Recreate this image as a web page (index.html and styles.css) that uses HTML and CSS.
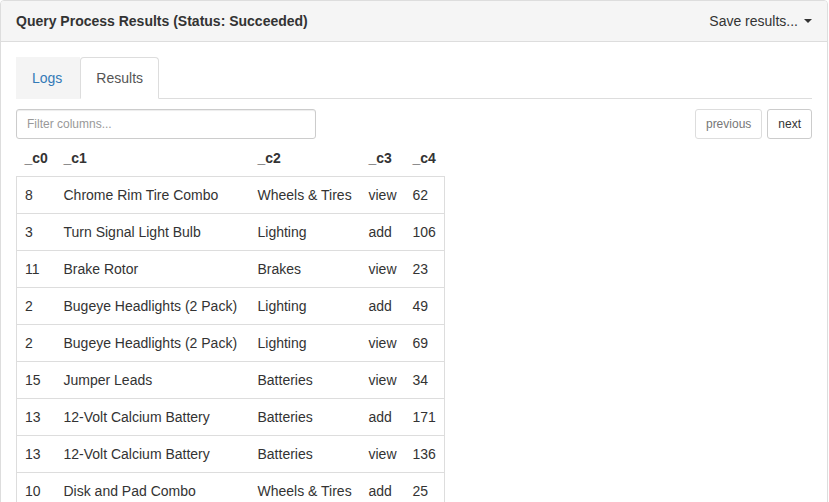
FILE: index.html
```html
<!DOCTYPE html>
<html>
<head>
<meta charset="utf-8">
<link rel="stylesheet" href="styles.css">
</head>
<body>
<div class="panel">
  <div class="panel-heading">
    <span class="panel-title">Query Process Results (Status: Succeeded)</span>
    <span class="save">Save results... <span class="caret"></span></span>
  </div>
  <div class="panel-body">
    <ul class="nav-tabs">
      <li class="tab"><a class="tab-link logs">Logs</a></li>
      <li class="tab active"><a class="tab-link">Results</a></li>
    </ul>
    <div class="toolbar">
      <input class="filter" type="text" placeholder="Filter columns...">
      <div class="pager">
        <button class="btn disabled">previous</button>
        <button class="btn">next</button>
      </div>
    </div>
    <table class="grid">
      <colgroup>
        <col class="w0"><col class="w1"><col class="w2"><col class="w3"><col class="w4">
      </colgroup>
      <thead>
        <tr><th>_c0</th><th>_c1</th><th>_c2</th><th>_c3</th><th>_c4</th></tr>
      </thead>
      <tbody>
        <tr><td>8</td><td>Chrome Rim Tire Combo</td><td>Wheels &amp; Tires</td><td>view</td><td>62</td></tr>
        <tr><td>3</td><td>Turn Signal Light Bulb</td><td>Lighting</td><td>add</td><td>106</td></tr>
        <tr><td>11</td><td>Brake Rotor</td><td>Brakes</td><td>view</td><td>23</td></tr>
        <tr><td>2</td><td>Bugeye Headlights (2 Pack)</td><td>Lighting</td><td>add</td><td>49</td></tr>
        <tr><td>2</td><td>Bugeye Headlights (2 Pack)</td><td>Lighting</td><td>view</td><td>69</td></tr>
        <tr><td>15</td><td>Jumper Leads</td><td>Batteries</td><td>view</td><td>34</td></tr>
        <tr><td>13</td><td>12-Volt Calcium Battery</td><td>Batteries</td><td>add</td><td>171</td></tr>
        <tr><td>13</td><td>12-Volt Calcium Battery</td><td>Batteries</td><td>view</td><td>136</td></tr>
        <tr><td>10</td><td>Disk and Pad Combo</td><td>Wheels &amp; Tires</td><td>add</td><td>25</td></tr>
      </tbody>
    </table>
  </div>
</div>
</body>
</html>
```
FILE: styles.css
```css
html, body {
  margin: 0;
  padding: 0;
  background: #fff;
  font-family: "Liberation Sans", Arial, sans-serif;
  font-size: 14px;
  line-height: 20px;
  color: #333;
  overflow: hidden;
}
.panel {
  margin-right: 1px;
  border: 1px solid #ddd;
  border-radius: 4px;
  height: 560px;
}
.panel-heading {
  display: flex;
  justify-content: space-between;
  align-items: center;
  padding: 10px 15px;
  background: #f5f5f5;
  border-bottom: 1px solid #ddd;
  border-radius: 3px 3px 0 0;
}
.panel-title {
  font-weight: bold;
  font-size: 14px;
}
.save {
  display: flex;
  align-items: center;
  gap: 6px;
}
.caret {
  width: 0;
  height: 0;
  border-top: 4px solid #333;
  border-left: 4px solid transparent;
  border-right: 4px solid transparent;
}
.panel-body {
  padding: 15px;
}
.nav-tabs {
  list-style: none;
  margin: 0;
  padding: 0;
  display: flex;
  border-bottom: 1px solid #ddd;
}
.tab {
  margin-bottom: -1px;
}
.tab-link {
  display: block;
  padding: 10px 15px;
  border: 1px solid transparent;
  border-radius: 4px 4px 0 0;
  color: #555;
}
.tab-link.logs {
  color: #337ab7;
  background: #f4f4f4;
  border-radius: 0;
  padding-right: 17px;
}
.tab.active .tab-link {
  background: #fff;
  border-color: #ddd #ddd transparent #ddd;
}
.toolbar {
  display: flex;
  justify-content: space-between;
  align-items: flex-start;
  margin-top: 10px;
}
.filter {
  box-sizing: border-box;
  width: 300px;
  height: 30px;
  padding: 5px 10px;
  font-family: inherit;
  font-size: 12px;
  border: 1px solid #ccc;
  border-radius: 3px;
  color: #555;
  box-shadow: inset 0 1px 1px rgba(0,0,0,.075);
  outline: none;
}
.filter::placeholder {
  color: #999;
}
.pager {
  display: flex;
  gap: 5px;
}
.btn {
  box-sizing: border-box;
  height: 30px;
  padding: 5px 10px;
  font-family: inherit;
  font-size: 12px;
  line-height: 18px;
  background: #fff;
  color: #333;
  border: 1px solid #ccc;
  border-radius: 3px;
}
.btn.disabled {
  color: #777;
  border-color: #ddd;
}
.grid {
  border-collapse: collapse;
  table-layout: fixed;
  width: 428px;
  margin-top: 0;
}
.w0 { width: 39px; }
.w1 { width: 194px; }
.w2 { width: 111px; }
.w3 { width: 44px; }
.w4 { width: 40px; }
.grid th {
  text-align: left;
  font-weight: bold;
  padding: 9px 8px 8px 8px;
  white-space: nowrap;
}
.grid td {
  padding: 8px;
  border-top: 1px solid #ddd;
  white-space: nowrap;
}
.grid td:first-child {
  border-left: 1px solid #ddd;
}
.grid td:last-child {
  border-right: 1px solid #ddd;
}
```
